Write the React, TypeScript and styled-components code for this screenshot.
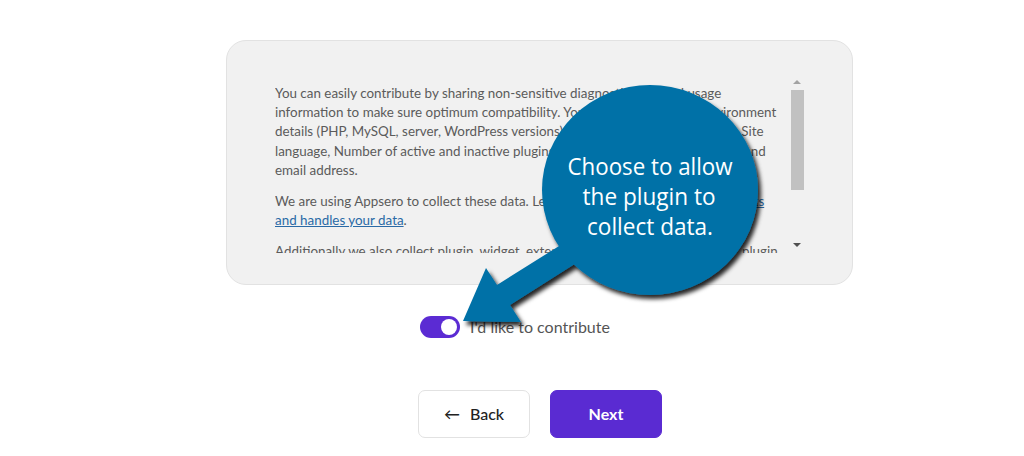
import React from "react";
import styled, { createGlobalStyle } from "styled-components";

const Global = createGlobalStyle`
  html, body { margin: 0; padding: 0; background: #ffffff; }
  body { font-family: Lato, "Noto Sans", sans-serif; }
`;

const Page = styled.div`
  position: relative;
  width: 1024px;
  height: 456px;
  box-sizing: border-box;
  padding: 40px 0 0 226px;
  display: flex;
  flex-direction: column;
  overflow: hidden;
`;

const Card = styled.div`
  width: 627px;
  height: 245px;
  box-sizing: border-box;
  background: #f1f1f1;
  border: 1px solid #e2e2e2;
  border-radius: 20px;
  padding: 35px 50px 0 48px;
  display: flex;
`;

const ScrollArea = styled.div`
  display: flex;
  height: 177px;
  gap: 5px;
`;

const TextBox = styled.div`
  width: 510px;
  overflow: hidden;
  padding-top: 8px;
  font-family: Lato, "Noto Sans", sans-serif;
  font-size: 13.4px;
  line-height: 19.2px;
  color: #5b5b5b;
`;

const Para = styled.p`
  margin: 0 0 12px 0;
`;

const Line = styled.span`
  display: block;
  white-space: nowrap;
`;

const Link = styled.a`
  color: #2a6aa6;
  text-decoration: underline;
`;

const Scrollbar = styled.div`
  width: 14px;
  display: flex;
  flex-direction: column;
  align-items: center;
  background: #f1f1f1;
`;

const Arrow = styled.div<{ $down?: boolean }>`
  width: 0;
  height: 0;
  border-left: 4px solid transparent;
  border-right: 4px solid transparent;
  ${(p) =>
    p.$down
      ? "border-top: 4px solid #505050; margin-top: auto; margin-bottom: 6px;"
      : "border-bottom: 4px solid #a3a3a3; margin-top: 4px;"}
`;

const Thumb = styled.div`
  width: 13px;
  height: 100px;
  margin-top: 6px;
  background: #c1c1c1;
`;

const ToggleRow = styled.label`
  display: flex;
  align-items: center;
  gap: 10px;
  margin: 31px 0 0 194px;
  font-family: Lato, "Noto Sans", sans-serif;
  font-size: 16px;
  line-height: 22px;
  color: #555555;
`;

const Switch = styled.span`
  width: 40px;
  height: 22px;
  box-sizing: border-box;
  border-radius: 11px;
  background: #5b2bd3;
  padding: 3px;
  display: flex;
  justify-content: flex-end;
`;

const Knob = styled.span`
  width: 16px;
  height: 16px;
  border-radius: 50%;
  background: #ffffff;
`;

const Buttons = styled.div`
  display: flex;
  gap: 20px;
  margin: 52px 0 0 192px;
`;

const Button = styled.button<{ $primary?: boolean }>`
  width: 112px;
  height: 48px;
  padding: 0 0 2px 0;
  border-radius: 7px;
  font-family: Lato, "Noto Sans", sans-serif;
  font-size: 16px;
  display: flex;
  align-items: center;
  justify-content: center;
  gap: 10px;
  cursor: pointer;
  ${(p) =>
    p.$primary
      ? "background: #5a2bd2; color: #ffffff; border: 1px solid #5a2bd2; font-weight: 700;"
      : "background: #ffffff; color: #222222; border: 1px solid #e2e2e2; font-weight: 500;"}
`;

const Overlay = styled.svg`
  position: absolute;
  left: 0;
  top: 0;
  width: 1024px;
  height: 456px;
  pointer-events: none;
`;

const CalloutText = styled.text`
  font-family: "Open Sans", "Noto Sans", sans-serif;
  font-size: 23px;
  fill: #ffffff;
`;

export default function App() {
  return (
    <>
      <Global />
      <Page>
        <Card>
          <ScrollArea>
            <TextBox>
              <Para>
                <Line>You can easily contribute by sharing non-sensitive diagnostic data and usage</Line>
                <Line>information to make sure optimum compatibility. You'll share your server environment</Line>
                <Line>details (PHP, MySQL, server, WordPress versions), Number of users in your site, Site</Line>
                <Line>language, Number of active and inactive plugins, Site name and URL, Your name and</Line>
                <Line>email address.</Line>
              </Para>
              <Para>
                <Line>
                  We are using Appsero to collect these data. Learn more about <Link href="#">how Appsero collects</Link>
                </Line>
                <Line>
                  <Link href="#">and handles your data</Link>.
                </Line>
              </Para>
              <Para>
                <Line>Additionally we also collect plugin, widget, extension usage data and settings of plugin</Line>
              </Para>
            </TextBox>
            <Scrollbar>
              <Arrow />
              <Thumb />
              <Arrow $down />
            </Scrollbar>
          </ScrollArea>
        </Card>
        <ToggleRow>
          <Switch>
            <Knob />
          </Switch>
          I'd like to contribute
        </ToggleRow>
        <Buttons>
          <Button>
            <span>←</span>
            <span>Back</span>
          </Button>
          <Button $primary>Next</Button>
        </Buttons>
        <Overlay viewBox="0 0 1024 456">
          <defs>
            <filter id="sh" x="-20%" y="-20%" width="140%" height="140%">
              <feDropShadow dx="3" dy="4" stdDeviation="2" floodColor="#000" floodOpacity="0.85" />
            </filter>
          </defs>
          <g filter="url(#sh)">
            <polygon
              points="463,321 486,268 497,285 610,214 622,234 510,305 521,322"
              fill="#0071a7"
            />
            <ellipse cx="650" cy="190" rx="108" ry="105" fill="#0071a7" />
          </g>
          <CalloutText x="650" y="175" textAnchor="middle" textLength="165" lengthAdjust="spacingAndGlyphs">
            Choose to allow
          </CalloutText>
          <CalloutText x="649" y="205" textAnchor="middle" textLength="133" lengthAdjust="spacingAndGlyphs">
            the plugin to
          </CalloutText>
          <CalloutText x="650" y="235" textAnchor="middle" textLength="126" lengthAdjust="spacingAndGlyphs">
            collect data.
          </CalloutText>
        </Overlay>
      </Page>
    </>
  );
}
